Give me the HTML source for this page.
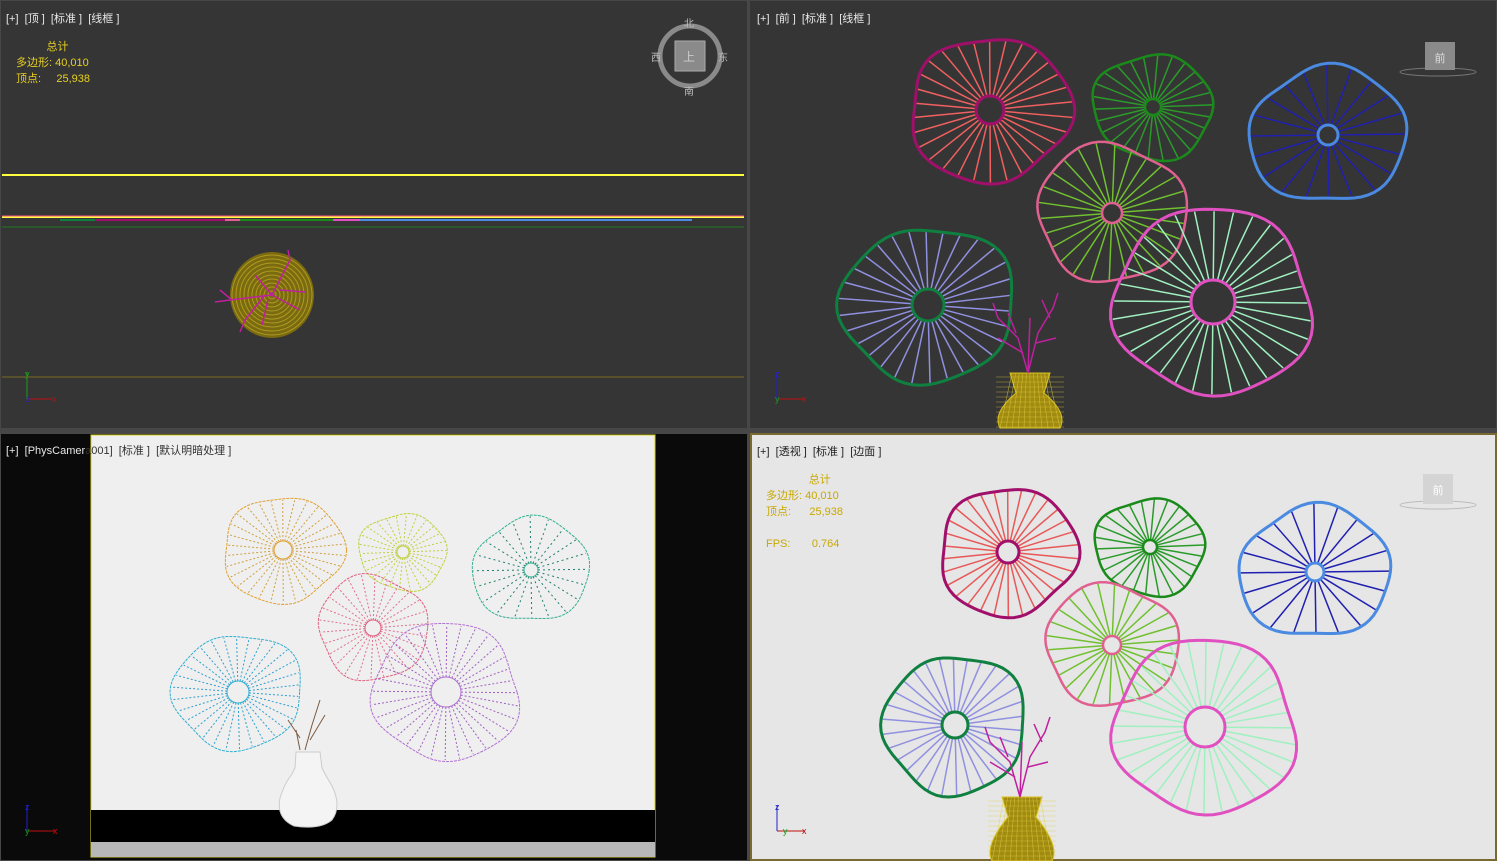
<!DOCTYPE html>
<html><head><meta charset="utf-8">
<style>
html,body{margin:0;padding:0;background:#4a4a4a;width:1497px;height:861px;overflow:hidden;font-family:"Liberation Sans","Noto Sans CJK SC",sans-serif}
svg{position:absolute;left:0;top:0}
.lbl{position:absolute;font-size:11px;color:#e8e8e8;white-space:pre}
.st{position:absolute;font-size:11px;color:#e8d020;line-height:16px;white-space:pre}
</style></head><body>
<svg id="s" width="1497" height="861" xmlns="http://www.w3.org/2000/svg">
<rect x="0" y="0" width="1497" height="861" fill="#474747"/>
<rect x="1" y="1" width="746" height="427" fill="#353535"/>
<rect x="750" y="1" width="746" height="427" fill="#353535"/>
<rect x="1" y="434" width="746" height="426" fill="#0a0a0a"/>
<rect x="91" y="435" width="564" height="422" fill="#efefef" stroke="#d8d020" stroke-width="1"/>
<rect x="91" y="810" width="564" height="32" fill="#000"/>
<rect x="91" y="842" width="564" height="15" fill="#b8b8b8"/>
<rect x="750" y="433" width="747" height="428" fill="#7a6a30"/>
<rect x="752" y="435" width="743" height="424" fill="#e6e6e6"/>
<line x1="2" y1="175" x2="744" y2="175" stroke="#ffff40" stroke-width="2"/>
<line x1="2" y1="217" x2="744" y2="217" stroke="#ffff40" stroke-width="2"/>
<line x1="2" y1="216" x2="744" y2="216" stroke="#ff5090" stroke-width="1"/>
<line x1="60" y1="220" x2="95" y2="220" stroke="#108040" stroke-width="2"/>
<line x1="95" y1="220" x2="225" y2="220" stroke="#a0106a" stroke-width="2"/>
<line x1="225" y1="220" x2="240" y2="220" stroke="#e06090" stroke-width="2"/>
<line x1="240" y1="220" x2="333" y2="220" stroke="#1a8a1a" stroke-width="2"/>
<line x1="333" y1="220" x2="360" y2="220" stroke="#e050c0" stroke-width="2"/>
<line x1="360" y1="220" x2="692" y2="220" stroke="#4a8ae0" stroke-width="2"/>
<line x1="2" y1="227" x2="744" y2="227" stroke="#207a20" stroke-width="1"/>
<line x1="2" y1="377" x2="744" y2="377" stroke="#7a6a20" stroke-width="1"/>
<ellipse cx="272" cy="295" rx="42" ry="43" fill="#7a6a10"/>
<g id="rings" fill="none" stroke="#b09a20" stroke-width="1"></g>
<circle cx="690" cy="56" r="30" fill="none" stroke="#8a8a8a" stroke-width="5"/>
<rect x="675" y="41" width="30" height="30" fill="#8a8a8a" stroke="#aaa"/>
<text x="689" y="61" font-size="12" fill="#ccc" font-family="Noto Sans CJK SC" text-anchor="middle">上</text>
<text x="689" y="27" font-size="10" fill="#bbb" font-family="Noto Sans CJK SC" text-anchor="middle">北</text>
<text x="689" y="95" font-size="10" fill="#bbb" font-family="Noto Sans CJK SC" text-anchor="middle">南</text>
<text x="656" y="61" font-size="10" fill="#bbb" font-family="Noto Sans CJK SC" text-anchor="middle">西</text>
<text x="723" y="61" font-size="10" fill="#bbb" font-family="Noto Sans CJK SC" text-anchor="middle">东</text>
<ellipse cx="1438" cy="72" rx="38" ry="4" fill="none" stroke="#777"/>
<rect x="1425" y="42" width="30" height="28" fill="#8a8a8a"/>
<text x="1440" y="62" font-size="11" fill="#ddd" font-family="Noto Sans CJK SC" text-anchor="middle">前</text>
<ellipse cx="1438" cy="505" rx="38" ry="4" fill="none" stroke="#bbb"/>
<rect x="1423" y="474" width="30" height="30" fill="#d4d4d4"/>
<text x="1438" y="494" font-size="11" fill="#fff" font-family="Noto Sans CJK SC" text-anchor="middle">前</text>
<g font-size="9" font-family="Liberation Sans">
<line x1="27" y1="399" x2="27" y2="372" stroke="#1a9a1a"/><line x1="27" y1="399" x2="52" y2="399" stroke="#c01010"/><text x="26" y="402" fill="#2020d0">z</text><text x="52" y="402" fill="#c01010">x</text><text x="25" y="377" fill="#1a9a1a">y</text>
<line x1="777" y1="399" x2="777" y2="372" stroke="#2020d0"/><line x1="777" y1="399" x2="804" y2="399" stroke="#c01010"/><text x="775" y="377" fill="#2020d0">z</text><text x="802" y="402" fill="#c01010">x</text><text x="775" y="402" fill="#1a9a1a">y</text>
<line x1="27" y1="831" x2="27" y2="805" stroke="#2020d0"/><line x1="27" y1="831" x2="55" y2="831" stroke="#c01010"/><text x="25" y="810" fill="#2020d0">z</text><text x="53" y="834" fill="#c01010">x</text><text x="25" y="834" fill="#1a9a1a">y</text>
<line x1="777" y1="831" x2="777" y2="805" stroke="#2020d0"/><line x1="777" y1="831" x2="805" y2="831" stroke="#c01010"/><text x="775" y="810" fill="#2020d0">z</text><text x="802" y="834" fill="#c01010">x</text><text x="783" y="834" fill="#1a9a1a">y</text>
</g>
<g id="g"></g>
</svg>
<div class="lbl" style="left:6px;top:10px">[+]  [顶 ]  [标准 ]  [线框 ]</div>
<div class="lbl" style="left:757px;top:10px">[+]  [前 ]  [标准 ]  [线框 ]</div>
<div class="lbl" style="left:6px;top:442px">[+]  [PhysCamer<span style="color:#333">a001]  [标准 ]  [默认明暗处理 ]</span></div>
<div class="lbl" style="left:757px;top:443px;color:#222">[+]  [透视 ]  [标准 ]  [边面 ]</div>
<div class="st" style="left:16px;top:39px">          总计
多边形: 40,010
顶点:     25,938</div>
<div class="st" style="left:766px;top:472px;color:#c8a800">              总计
多边形: 40,010
顶点:      25,938

FPS:       0.764</div>
<script>
var g=document.getElementById('g'),NS='http://www.w3.org/2000/svg';
function el(t,a){var e=document.createElementNS(NS,t);for(var k in a)e.setAttribute(k,a[k]);g.appendChild(e);return e;}
function leaf(cx,cy,rx,ry,hole,oc,sc,n,seed,ow,dash,sw){
  var pts=[],N=72;
  function W(a){return 1+0.035*Math.sin(5*a+seed)+0.03*Math.sin(3*a+seed*2)+0.02*Math.sin(2*a+seed*3);}
  for(var i=0;i<N;i++){var a=i/N*Math.PI*2;var w=W(a);pts.push([cx+rx*w*Math.cos(a),cy+ry*w*Math.sin(a)]);}
  var spokes=n||28;
  for(var j=0;j<spokes;j++){var a=j/spokes*Math.PI*2+seed*0.1;var w=W(a);
    var o={x1:cx+hole*Math.cos(a),y1:cy+hole*Math.sin(a),x2:cx+rx*w*Math.cos(a)*0.98,y2:cy+ry*w*Math.sin(a)*0.98,stroke:sc,'stroke-width':sw||1.5};
    if(dash)o['stroke-dasharray']=dash;el('line',o);}
  var d='M'+pts.map(function(p){return p[0].toFixed(1)+','+p[1].toFixed(1)}).join('L')+'Z';
  var o={d:d,fill:'none',stroke:oc,'stroke-width':ow||3};if(dash)o['stroke-dasharray']='3,1';el('path',o);
  el('circle',{cx:cx,cy:cy,r:hole,fill:'none',stroke:oc,'stroke-width':ow||3});
}
leaf(990,110,80,72,14,'#a0106a','#f06060',30,1,3);
leaf(1153,107,60,52,8,'#1a8a1a','#2a9a2a',26,2,2.5);
leaf(1328,135,78,68,10,'#4a8ae0','#2020b0',20,3,3);
leaf(1112,213,75,68,10,'#e06090','#70c030',26,4,2.5);
leaf(928,305,86,78,16,'#108040','#9090e0',30,5,3);
leaf(1213,302,100,92,22,'#e050c0','#a0f0c0',32,6,3);
leaf(1008,552,68,64,11,'#a0106a','#e85858',30,1,3);
leaf(1150,547,55,48,7,'#1a8a1a','#2a9a2a',26,2,2.5);
leaf(1315,572,75,66,9,'#4a8ae0','#2020b0',20,3,3);
leaf(1112,645,67,60,9,'#e06090','#70c030',26,4,2.5);
leaf(955,725,70,70,13,'#108040','#9090e0',30,5,3);
leaf(1205,727,92,86,20,'#e050c0','#a0f0c0',32,6,3);
leaf(283,550,60,53,9,'#e0a030','#d0a040',30,1,1,'2,2',1);
leaf(403,552,44,38,6,'#c0d040','#c0d040',26,2,1,'2,2',1);
leaf(531,570,58,52,7,'#30b090','#208070',20,3,1,'2,3',1);
leaf(373,628,55,52,8,'#e06080','#e07090',26,4,1,'2,2',1);
leaf(238,692,64,58,11,'#30b0d0','#30a0d0',30,5,1,'2,2',1);
leaf(446,692,74,68,15,'#b070d0','#a060c0',32,6,1,'2,2',1);
el('path',{d:'M296,752 L320,752 L322,768 Q326,776 332,786 Q342,806 332,820 Q320,830 294,826 Q276,818 280,798 Q284,784 292,774 L295,768Z',fill:'#f4f4f4',stroke:'#ccc'});
el('path',{d:'M300,750 L296,730 M305,750 L312,725 L320,700 M310,740 L325,715 M300,738 L288,720',stroke:'#7a5a40',fill:'none'});
var r=document.getElementById('rings');
for(var k=4;k<42;k+=4){var c=document.createElementNS(NS,'ellipse');c.setAttribute('cx',272);c.setAttribute('cy',295);c.setAttribute('rx',k);c.setAttribute('ry',k);r.appendChild(c);}
el('path',{d:'M272,295 L230,300 L215,302 M272,295 L290,260 L288,250 M272,295 L300,310 M265,295 L245,320 L240,332 M272,295 L255,275 M280,290 L305,292 M268,300 L262,325 M220,290 L232,300',stroke:'#c020a0','stroke-width':1.5,fill:'none'});
function vase(cx,by,top){
  el('path',{d:'M'+(cx-20)+','+top+' L'+(cx+20)+','+top+' L'+(cx+14)+','+(top+20)+' Q'+(cx+38)+','+(by-15)+' '+(cx+30)+','+by+' L'+(cx-30)+','+by+' Q'+(cx-38)+','+(by-15)+' '+(cx-14)+','+(top+20)+'Z',fill:'#a08a10',stroke:'#d8c020','stroke-width':1});
  for(var y=top+4;y<by;y+=5)el('line',{x1:cx-34,y1:y,x2:cx+34,y2:y,stroke:'#e0d040','stroke-width':0.6,opacity:.7});
  for(var x=-30;x<=30;x+=6)el('line',{x1:cx+x*0.6,y1:top,x2:cx+x,y2:by,stroke:'#e0d040','stroke-width':0.6,opacity:.7});
}
vase(1030,428,373);vase(1022,861,797);
function branches(x,y){el('path',{d:'M'+x+','+y+' l-10,-35 l-20,-20 l-5,-15 M'+x+','+y+' l10,-40 l15,-25 l5,-15 M'+(x-5)+','+(y-20)+' l-25,-15 M'+(x+8)+','+(y-30)+' l20,-5 M'+x+','+y+' l2,-55 M'+(x-12)+','+(y-40)+' l-8,-20 M'+(x+22)+','+(y-55)+' l-8,-18',stroke:'#c020a0','stroke-width':1.5,fill:'none'});}
branches(1028,373);branches(1020,797);
</script>
</body></html>
